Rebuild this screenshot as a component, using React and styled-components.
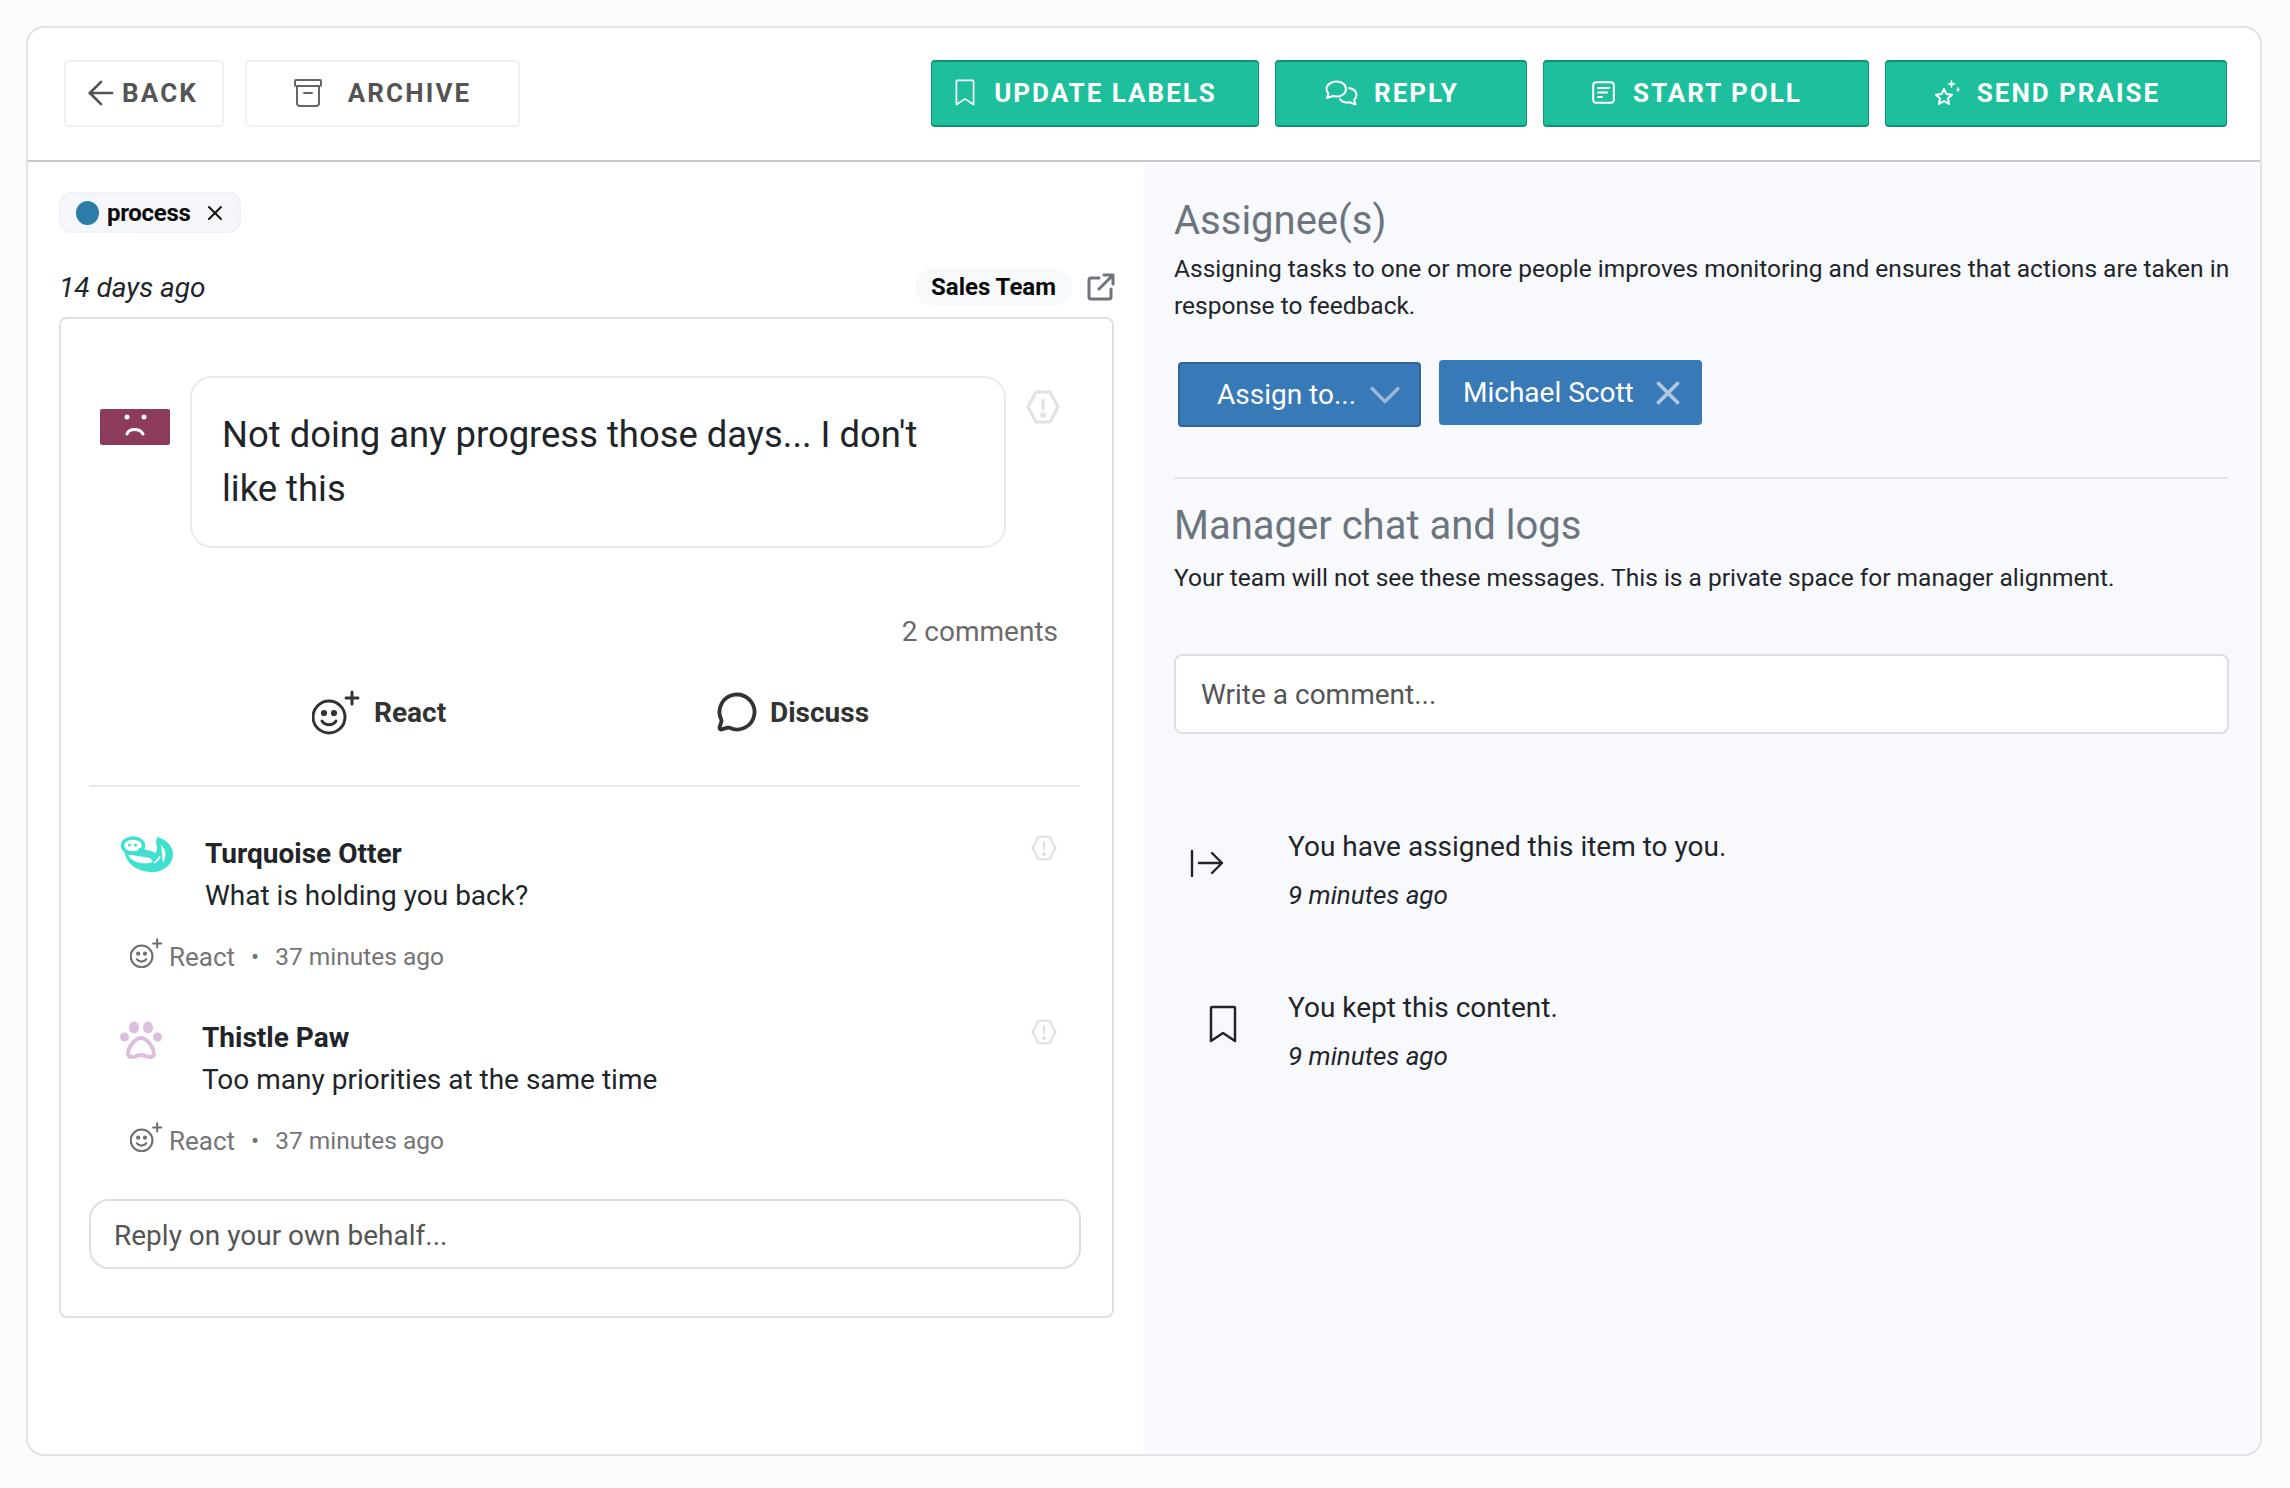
import React from "react";
import styled, { createGlobalStyle } from "styled-components";
import { ArrowLeft, ChevronDown, X, MessageCircle } from "lucide-react";

const GlobalStyle = createGlobalStyle`
  html, body { margin: 0; padding: 0; background: #fbfbf9; }
  body { font-family: Roboto, "Liberation Sans", sans-serif; color: #212529; }
  * { box-sizing: border-box; }
`;

const BookmarkIcon = ({ width, height, color = "#fff", weight = 2.400 }) => (
  <svg width={width} height={height} viewBox="0 0 28 38" fill="none" preserveAspectRatio="none" stroke={color} strokeWidth={weight} strokeLinejoin="round" strokeLinecap="round">
    <path d="M3 2h22a1 1 0 0 1 1 1v33L14 28 2 36V3a1 1 0 0 1 1-1z" />
  </svg>
);

const ArchiveIcon = () => (
  <svg width="28" height="28" viewBox="0 0 28 28" fill="none" stroke="#666" strokeWidth="2" strokeLinecap="round" strokeLinejoin="round">
    <rect x="1" y="1" width="26" height="6" rx="1" />
    <path d="M3 7v17a3 3 0 0 0 3 3h16a3 3 0 0 0 3-3V7M10 14h8" />
  </svg>
);

const ReplyIcon = () => (
  <svg width="33" height="26" viewBox="0 0 33 26" fill="none" stroke="#fff" strokeWidth="2" strokeLinecap="round" strokeLinejoin="round">
    <path d="M11.500 1.500c5 0 9.500 3 9.500 7.500s-4.500 7.500-9.500 7.500c-1.200 0-2.300-.2-3.300-.5L2 18l1.500-4.300C2.300 12.400 1.500 10.800 1.500 9c0-4.500 5-7.500 10-7.500z" />
    <path d="M24 8c4 .8 7.500 3.300 7.500 7 0 2-.9 3.600-2.400 4.800l1.400 4.700-6-2.300c-3.500.6-7.700-.4-9.500-3.200" />
  </svg>
);

const PollIcon = () => (
  <svg width="23" height="23" viewBox="0 0 23 23" fill="none" stroke="#fff" strokeWidth="2" strokeLinecap="round">
    <rect x="1.200" y="1.200" width="20.600" height="20.600" rx="3" />
    <path d="M6 7h11M6 11.500h9M6 16h4" />
  </svg>
);

const PraiseIcon = () => (
  <svg width="26" height="28" viewBox="0 0 26 28" fill="none" stroke="#fff" strokeWidth="2" strokeLinejoin="round">
    <path d="M10 10l2.400 5 5.600.7-4.100 3.800 1.100 5.500-5-2.800-5 2.800 1.100-5.500L2 15.700l5.600-.7z" />
    <path d="M17.500 1l1 3 3 1-3 1-1 3-1-3-3-1 3-1zM24 8l.6 1.900 1.400.6-1.400.6L24 13l-.6-1.900-1.400-.6 1.400-.6z" fill="#fff" strokeWidth="0.400" />
  </svg>
);

const ExternalIcon = () => (
  <svg width="28" height="28" viewBox="0 0 28 28" fill="none" stroke="#6c757d" strokeWidth="3" strokeLinecap="round" strokeLinejoin="round">
    <path d="M12 5H4a2 2 0 0 0-2 2v17a2 2 0 0 0 2 2h18a2 2 0 0 0 2-2v-8" />
    <path d="M12 16L26 2M17 2h9v9" />
  </svg>
);

const SadFace = () => (
  <svg width="70" height="36" viewBox="0 0 70 36">
    <rect width="70" height="36" rx="2" fill="#8c3b5d" />
    <circle cx="27" cy="8" r="2.500" fill="#fff" />
    <circle cx="44" cy="8" r="2.500" fill="#fff" />
    <path d="M27 25c2-6 13-6 16 0" fill="none" stroke="#fff" strokeWidth="3" strokeLinecap="round" />
  </svg>
);

const FlagIcon = ({ size = 34 }) => (
  <svg width={size} height={size} viewBox="0 0 34 34" fill="none" stroke="#e0e1e3" strokeWidth="3" strokeLinejoin="round">
    <path d="M10 2h14l8 15-8 15H10L2 17z" />
    <path d="M17 10v9" strokeLinecap="round" />
    <circle cx="17" cy="25" r="1.200" fill="#e0e1e3" />
  </svg>
);

const ReactIcon = ({ size = 50, color = "#333" }) => (
  <svg width={size} height={size * 0.9} viewBox="0 0 50 45" fill="none" stroke={color} strokeWidth="3" strokeLinecap="round">
    <circle cx="17" cy="27" r="16" />
    <circle cx="12" cy="23" r="1.600" fill={color} />
    <circle cx="22" cy="23" r="1.600" fill={color} />
    <path d="M10 31c3 5 11 5 14 0" />
    <path d="M40 2v12M34 8h12" />
  </svg>
);

const OtterIcon = () => (
  <svg width="53" height="37" viewBox="0 0 53 37">
    <path d="M4 13C5 26 15 35 30 36c14 1 23-8 23-18C53 10 46 3 37 1l-1 6c2 5 1 9-3 13L22 12z" fill="#40e0d0" />
    <path d="M8 19c7 0 15 2 22 3l3 4c-9 3-21 1-25-7z" fill="#fff" />
    <path d="M41 9c5 4 6 11 2 18-1-6-1-12-2-18z" fill="#fff" />
    <path d="M34 27c3-2 5-4 6-7" fill="none" stroke="#fff" strokeWidth="1.500" />
    <ellipse cx="13" cy="9.500" rx="10.500" ry="7.500" fill="#fff" stroke="#40e0d0" strokeWidth="3.500" />
    <circle cx="9.500" cy="9" r="1.500" fill="#40e0d0" />
    <circle cx="15.500" cy="9" r="1.500" fill="#40e0d0" />
    <path d="M20 14l13 4" fill="none" stroke="#40e0d0" strokeWidth="4" strokeLinecap="round" />
  </svg>
);

const PawIcon = () => (
  <svg width="42" height="38" viewBox="0 0 42 38" fill="#dcbfdc">
    <ellipse cx="14" cy="6.500" rx="5" ry="6" />
    <ellipse cx="28" cy="6.500" rx="5" ry="6" />
    <ellipse cx="4.500" cy="16" rx="4.500" ry="4.500" />
    <ellipse cx="37.500" cy="16" rx="4.500" ry="4.500" />
    <path d="M21 17c-5 0-8 4-11 9-3 5-3 10 2 10 3 0 6-2 9-2s6 2 9 2c5 0 5-5 2-10-3-5-6-9-11-9z" fill="none" stroke="#dcbfdc" strokeWidth="4" />
  </svg>
);

const AssignIcon = () => (
  <svg width="34" height="28" viewBox="0 0 34 28" fill="none" stroke="#212529" strokeWidth="2.400" strokeLinecap="round" strokeLinejoin="round">
    <path d="M2 2v25M9 14h23M22 4l10 10-10 10" />
  </svg>
);

const comments = [
  { id: 1, name: "Turquoise Otter", text: "What is holding you back?", Avatar: OtterIcon },
  { id: 2, name: "Thistle Paw", text: "Too many priorities at the same time", Avatar: PawIcon },
];

const logs = [
  { id: 1, text: "You have assigned this item to you.", Icon: AssignIcon, indent: false },
  { id: 2, text: "You kept this content.", Icon: () => <BookmarkIcon width={28} height={38} color="#212529" weight={2.500} />, indent: true },
];

const App = () => (
  <>
    <GlobalStyle />
    <Page>
      <Frame>
        <Header>
          <HeaderGroup>
            <GhostButton $width={160} $gap={10}>
              <BackArrow size={38} strokeWidth={1.700} />
              BACK
            </GhostButton>
            <GhostButton $width={275} $gap={26}>
              <ArchiveIcon />
              ARCHIVE
            </GhostButton>
          </HeaderGroup>
          <HeaderActions>
            <ActionButton $width={328} $gap={19}>
              <BookmarkIcon width={20} height={27} />
              UPDATE LABELS
            </ActionButton>
            <ActionButton $width={252} $gap={16}>
              <ReplyIcon />
              REPLY
            </ActionButton>
            <ActionButton $width={326} $gap={18}>
              <PollIcon />
              START POLL
            </ActionButton>
            <ActionButton $width={342} $gap={17}>
              <PraiseIcon />
              SEND PRAISE
            </ActionButton>
          </HeaderActions>
        </Header>
        <Body>
          <LeftPanel>
            <Tag>
              <TagDot />
              process
              <X size={24} strokeWidth={2} color="#111" />
            </Tag>
            <MetaRow>
              <When>14 days ago</When>
              <MetaRight>
                <TeamPill>Sales Team</TeamPill>
                <ExternalIcon />
              </MetaRight>
            </MetaRow>
            <Card>
              <QuestionRow>
                <Mood>
                  <SadFace />
                </Mood>
                <Bubble>Not doing any progress those days... I don't like this</Bubble>
                <BubbleFlag>
                  <FlagIcon />
                </BubbleFlag>
              </QuestionRow>
              <CommentCount>2 comments</CommentCount>
              <Reactions>
                <ReactionButton>
                  <ReactIcon />
                  React
                </ReactionButton>
                <ReactionButton>
                  <MessageCircle size={42} strokeWidth={2.200} color="#333" />
                  Discuss
                </ReactionButton>
              </Reactions>
              <Divider />
              {comments.map(({ id, name, text, Avatar }) => (
                <Comment key={id}>
                  <CommentTop>
                    <AvatarSlot $small={id === 2}>
                      <Avatar />
                    </AvatarSlot>
                    <CommentBody>
                      <CommentName>{name}</CommentName>
                      <CommentText>{text}</CommentText>
                    </CommentBody>
                    <CommentFlag>
                      <FlagIcon size={26} />
                    </CommentFlag>
                  </CommentTop>
                  <CommentMeta>
                    <ReactIcon size={34} color="#6e6e6e" />
                    <span>React</span>
                    <Dot>•</Dot>
                    <MetaTime>37 minutes ago</MetaTime>
                  </CommentMeta>
                </Comment>
              ))}
              <ReplyBox>Reply on your own behalf...</ReplyBox>
            </Card>
          </LeftPanel>
          <RightPanel>
            <SectionTitle>Assignee(s)</SectionTitle>
            <Description $top={2}>
              Assigning tasks to one or more people improves monitoring and ensures that actions are taken in response to feedback.
            </Description>
            <AssignRow>
              <AssignButton>
                Assign to...
                <ChevronDown size={52} strokeWidth={1.500} color="#9db9d8" />
              </AssignButton>
              <AssigneeChip>
                Michael Scott
                <X size={38} strokeWidth={2.400} color="#b3c8e0" />
              </AssigneeChip>
            </AssignRow>
            <RightDivider />
            <ManagerTitle>Manager chat and logs</ManagerTitle>
            <Description $top={6}>Your team will not see these messages. This is a private space for manager alignment.</Description>
            <CommentInput>Write a comment...</CommentInput>
            <LogList>
              {logs.map(({ id, text, Icon, indent }) => (
                <LogItem key={id}>
                  <LogIcon $indent={indent}>
                    <Icon />
                  </LogIcon>
                  <div>
                    <LogText>{text}</LogText>
                    <LogTime>9 minutes ago</LogTime>
                  </div>
                </LogItem>
              ))}
            </LogList>
          </RightPanel>
        </Body>
      </Frame>
    </Page>
  </>
);

const Page = styled.div`
  padding: 26px 28px 32px 26px;
  height: 1488px;
`;
const Frame = styled.div`
  display: flex;
  flex-direction: column;
  height: 1430px;
  background: #fff;
  border: 2px solid #e2e3e4;
  border-radius: 18px;
  overflow: hidden;
`;
const Header = styled.div`
  display: flex;
  justify-content: space-between;
  height: 134px;
  padding: 32px 33px 0 36px;
  border-bottom: 2px solid #c8c8c8;
  flex: none;
`;
const HeaderGroup = styled.div`
  display: flex;
  gap: 21px;
`;
const HeaderActions = styled.div`
  display: flex;
  gap: 16px;
`;
const GhostButton = styled.div`
  display: flex;
  align-items: center;
  justify-content: center;
  gap: ${(p) => p.$gap}px;
  width: ${(p) => p.$width}px;
  height: 67px;
  padding-bottom: 2px;
  background: #fff;
  border: 2px solid #f0f1f2;
  border-radius: 4px;
  color: #545454;
  font-size: 26px;
  font-weight: 700;
  letter-spacing: 2.100px;
`;
const BackArrow = styled(ArrowLeft)`
  margin: 0 -8px;
`;
const ActionButton = styled.div`
  display: flex;
  align-items: center;
  justify-content: center;
  gap: ${(p) => p.$gap}px;
  width: ${(p) => p.$width}px;
  height: 67px;
  padding: 0 18px 2px 0;
  background: #1dbf9d;
  border: 1px solid #148f75;
  border-top-width: 2px;
  border-bottom-width: 2px;
  border-radius: 4px;
  color: #fff;
  font-size: 26px;
  font-weight: 700;
  letter-spacing: 2px;
`;
const Body = styled.div`
  display: flex;
  flex: 1;
  min-height: 0;
`;
const LeftPanel = styled.div`
  width: 1116px;
  padding: 30px 30px 0 31px;
  flex: none;
`;
const Tag = styled.div`
  display: inline-flex;
  align-items: center;
  gap: 8px;
  height: 41px;
  padding: 0 12px 0 15px;
  background: #f5f7fa;
  border: 2px solid #f0f2f5;
  border-radius: 12px;
  color: #0a0a0a;
  font-size: 24px;
  font-weight: 700;
  letter-spacing: -0.300px;

  svg {
    margin-left: 4px;
  }
`;
const TagDot = styled.span`
  width: 23px;
  height: 24px;
  border-radius: 50%;
  background: #2b7da8;
`;
const MetaRow = styled.div`
  display: flex;
  align-items: center;
  justify-content: space-between;
  margin-top: 29px;
  height: 50px;
`;
const When = styled.div`
  font-size: 28px;
  font-style: italic;
`;
const MetaRight = styled.div`
  display: flex;
  align-items: center;
  gap: 15px;
  margin-right: -1px;
`;
const TeamPill = styled.div`
  display: flex;
  align-items: center;
  height: 38px;
  padding: 0 16px;
  background: #f8f9fb;
  border-radius: 19px;
  color: #0a0a0a;
  font-size: 24px;
  font-weight: 700;
`;
const Card = styled.div`
  height: 1001px;
  margin-top: 5px;
  padding: 57px 32px 0 28px;
  border: 2px solid #dfe0e2;
  border-radius: 8px;
`;
const QuestionRow = styled.div`
  display: flex;
  align-items: flex-start;
`;
const Mood = styled.div`
  width: 101px;
  padding: 33px 0 0 11px;
  flex: none;
`;
const Bubble = styled.div`
  width: 816px;
  height: 172px;
  padding: 30px 56px 0 30px;
  border: 2px solid #e9eaec;
  border-radius: 22px;
  font-size: 36.400px;
  line-height: 54px;
  flex: none;
`;
const BubbleFlag = styled.div`
  margin: 14px 0 0 20px;
`;
const CommentCount = styled.div`
  margin: 64px 22px 0 0;
  text-align: right;
  color: #6b6b6b;
  font-size: 28px;
  line-height: 40px;
`;
const Reactions = styled.div`
  display: grid;
  grid-template-columns: 404px auto;
  padding-left: 223px;
  margin-top: 30px;
  height: 60px;
  align-items: center;
`;
const ReactionButton = styled.div`
  display: flex;
  align-items: center;
  gap: 12px;
  color: #333;
  font-size: 28px;
  font-weight: 700;
`;
const Divider = styled.div`
  height: 2px;
  margin-top: 43px;
  background: #e8e8e8;
`;
const Comment = styled.div`
  height: 184px;
  padding-top: 46px;
`;
const CommentTop = styled.div`
  display: flex;
  align-items: flex-start;
  padding-right: 23px;
`;
const AvatarSlot = styled.div`
  width: ${(p) => (p.$small ? 113 : 116)}px;
  padding-left: 31px;
  margin-top: ${(p) => (p.$small ? 4 : 3)}px;
  flex: none;
`;
const CommentBody = styled.div`
  flex: 1;
`;
const CommentName = styled.div`
  font-size: 28px;
  font-weight: 700;
  line-height: 42px;
`;
const CommentText = styled.div`
  font-size: 28px;
  line-height: 42px;
`;
const CommentFlag = styled.div`
  margin-top: 2px;
`;
const CommentMeta = styled.div`
  display: flex;
  align-items: center;
  margin: 22px 0 0 41px;
  color: #757575;
  font-size: 26px;
  line-height: 36px;

  svg {
    margin: -8px 5px 0 0;
  }
`;
const MetaTime = styled.span`
  font-size: 24.500px;
`;
const Dot = styled.span`
  margin: 0 16px;
  font-size: 24px;
`;
const ReplyBox = styled.div`
  display: flex;
  align-items: center;
  width: 992px;
  height: 70px;
  margin-top: 44px;
  padding: 3px 0 0 23px;
  border: 2px solid #dcdee1;
  border-radius: 20px;
  color: #555;
  font-size: 28px;
`;
const RightPanel = styled.div`
  flex: 1;
  padding: 32px 31px 0 30px;
  background: #f8f9fd;
`;
const SectionTitle = styled.div`
  color: #6c757d;
  font-size: 40px;
  line-height: 54px;
`;
const ManagerTitle = styled(SectionTitle)`
  margin-top: 20px;
`;
const Description = styled.div`
  margin: ${(p) => p.$top}px -6px 0 0;
  color: #212529;
  font-size: 24.500px;
  line-height: 37px;
`;
const AssignRow = styled.div`
  display: flex;
  align-items: flex-start;
  gap: 18px;
  margin: 36px 0 0 4px;
`;
const AssignButton = styled.div`
  display: flex;
  align-items: center;
  justify-content: space-between;
  width: 243px;
  height: 65px;
  margin-top: 2px;
  padding: 0 8px 0 37px;
  background: #377ab7;
  border: 2px solid #2e6699;
  border-radius: 4px;
  color: #fff;
  font-size: 28px;
`;
const AssigneeChip = styled.div`
  display: flex;
  align-items: center;
  justify-content: space-between;
  width: 263px;
  height: 65px;
  padding: 0 15px 0 24px;
  background: #377ab7;
  border-radius: 4px;
  color: #fff;
  font-size: 28px;
`;
const RightDivider = styled.div`
  height: 2px;
  margin-top: 50px;
  background: #e2e3e6;
`;
const CommentInput = styled.div`
  display: flex;
  align-items: center;
  height: 80px;
  margin-top: 58px;
  padding-left: 25px;
  background: #fff;
  border: 2px solid #dcdee1;
  border-radius: 8px;
  color: #555;
  font-size: 28px;
`;
const LogList = styled.div`
  display: flex;
  flex-direction: column;
  gap: 77px;
  margin-top: 95px;
`;
const LogItem = styled.div`
  display: flex;
  align-items: center;
`;
const LogIcon = styled.div`
  display: flex;
  width: 114px;
  margin-top: -17px;
  padding-left: ${(p) => (p.$indent ? 35 : 16)}px;
  flex: none;
`;
const LogText = styled.div`
  font-size: 28px;
  line-height: 36px;
`;
const LogTime = styled.div`
  margin-top: 12px;
  font-size: 26px;
  font-style: italic;
  line-height: 36px;
`;

export default App;
